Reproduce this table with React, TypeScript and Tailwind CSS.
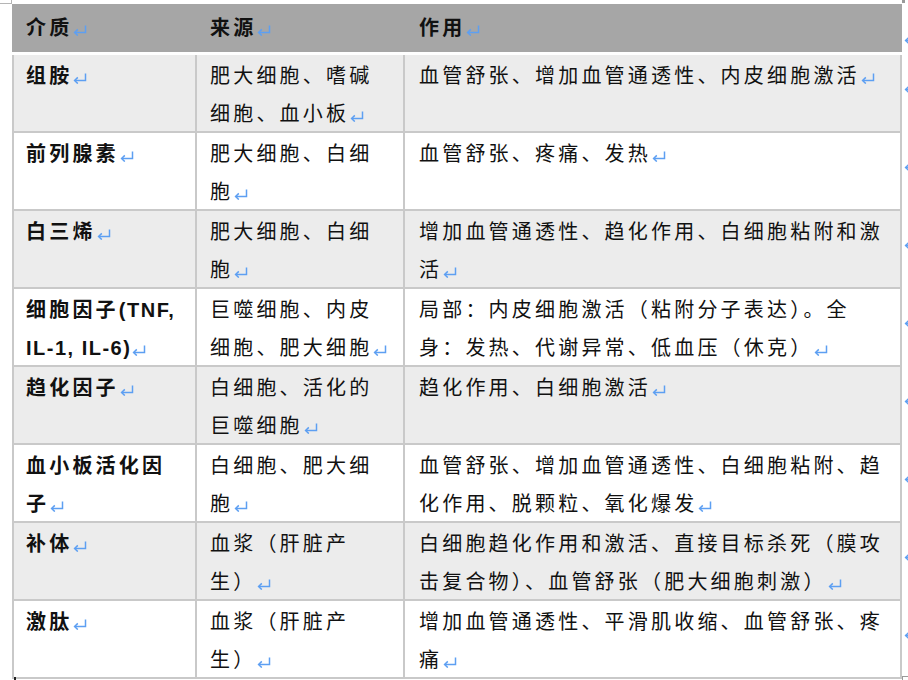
const rows = [
  { label: ['组胺'], source: ['肥大细胞、嗜碱', '细胞、血小板'], effect: ['血管舒张、增加血管通透性、内皮细胞激活'] },
  { label: ['前列腺素'], source: ['肥大细胞、白细', '胞'], effect: ['血管舒张、疼痛、发热'] },
  { label: ['白三烯'], source: ['肥大细胞、白细', '胞'], effect: ['增加血管通透性、趋化作用、白细胞粘附和激', '活'] },
  {
    label: ['细胞因子(TNF,', 'IL-1, IL-6)'],
    source: ['巨噬细胞、内皮', '细胞、肥大细胞'],
    effect: ['局部：内皮细胞激活（粘附分子表达）。全', '身：发热、代谢异常、低血压（休克）'],
  },
  { label: ['趋化因子'], source: ['白细胞、活化的', '巨噬细胞'], effect: ['趋化作用、白细胞激活'] },
  {
    label: ['血小板活化因', '子'],
    source: ['白细胞、肥大细', '胞'],
    effect: ['血管舒张、增加血管通透性、白细胞粘附、趋', '化作用、脱颗粒、氧化爆发'],
  },
  {
    label: ['补体'],
    source: ['血浆（肝脏产', '生）'],
    effect: ['白细胞趋化作用和激活、直接目标杀死（膜攻', '击复合物）、血管舒张（肥大细胞刺激）'],
  },
  { label: ['激肽'], source: ['血浆（肝脏产', '生）'], effect: ['增加血管通透性、平滑肌收缩、血管舒张、疼', '痛'] },
];

function ReturnMark() {
  return (
    <svg width="14" height="11" viewBox="0 0 14 11" className="inline-block align-[-1px] ml-[1px]">
      <path d="M12.5 0.5V7.5H1.8" fill="none" stroke="#5d9ff2" strokeWidth="1.5" />
      <path d="M4.8 4.4L1.6 7.5L4.8 10.6" fill="none" stroke="#5d9ff2" strokeWidth="1.5" />
    </svg>
  );
}

// latin bits (TNF, IL-1 ...) are set tighter than the CJK text
function Line({ text, last }: { text: string; last: boolean }) {
  const parts = text.split(/([A-Za-z0-9(),\- ]+)/).filter(Boolean);
  return (
    <div className="whitespace-nowrap">
      {parts.map((p, i) =>
        /^[A-Za-z0-9(),\- ]+$/.test(p) ? (
          <span key={i} className="tracking-[1.5px]">{p}</span>
        ) : (
          <span key={i} className="tracking-[3.2px]">{p}</span>
        )
      )}
      {last && <ReturnMark />}
    </div>
  );
}

function Cell({ lines, className }: { lines: string[]; className: string }) {
  return (
    <div className={className}>
      {lines.map((l, i) => (
        <Line key={i} text={l} last={i === lines.length - 1} />
      ))}
    </div>
  );
}

function EdgeMark({ top }: { top: string }) {
  return (
    <div className={'ml-px shrink-0 ' + top}>
      <ReturnMark />
    </div>
  );
}

export default function App() {
  return (
    <div className="relative w-[908px] h-[680px] overflow-hidden bg-white text-[20px] leading-[38px] text-[#111] font-['Liberation_Sans','Noto_Sans_CJK_SC',sans-serif]">
      {/* page corner marks */}
      <div className="absolute left-0 top-[3px] w-[11px] h-px bg-[#b5b5b5]" />
      <div className="absolute left-[11px] top-0 w-px h-[4px] bg-[#b5b5b5]" />
      <div className="absolute left-[902px] top-0 w-[3px] h-[3px] bg-[#9a9a9a]" />
      <div className="absolute left-[14px] top-[677px] w-[2px] h-[3px] bg-[#222]" />
      <div className="absolute left-[902px] top-[676px] w-[6px] h-px bg-[#9a9a9a]" />
      <div className="absolute left-[902px] top-[676px] w-px h-[4px] bg-[#9a9a9a]" />

      <div className="pt-[4px] pl-[12px] w-max">
        <div className="flex">
          <div className="flex shrink-0 w-[890px] h-[48px] bg-[#a6a6a6] border-l-2 border-transparent font-bold">
            <Cell lines={['介质']} className="w-[183px] pl-[12px] pt-[5px] border-r-2 border-transparent" />
            <Cell lines={['来源']} className="w-[208px] pl-[13px] pt-[5px] border-r-2 border-transparent" />
            <Cell lines={['作用']} className="flex-1 pl-[14px] pt-[5px] border-r-2 border-transparent" />
          </div>
          <EdgeMark top="mt-[13px]" />
        </div>

        {rows.map((r, i) => (
          <div key={i} className="flex">
            <div
              className={
                'flex shrink-0 w-[890px] h-[78px] border-l-2 border-b-2 border-[#c9c9c9] ' +
                (i % 2 === 0 ? 'bg-[#ececec]' : 'bg-white')
              }
            >
              <Cell lines={r.label} className="w-[183px] pl-[12px] pt-[2px] border-r-2 border-[#c9c9c9] font-bold" />
              <Cell lines={r.source} className="w-[208px] pl-[13px] pt-[2px] border-r-2 border-[#c9c9c9]" />
              <Cell lines={r.effect} className="flex-1 pl-[14px] pt-[2px] border-r-2 border-[#c9c9c9]" />
            </div>
            <EdgeMark top="mt-[11px]" />
          </div>
        ))}
      </div>
    </div>
  );
}
